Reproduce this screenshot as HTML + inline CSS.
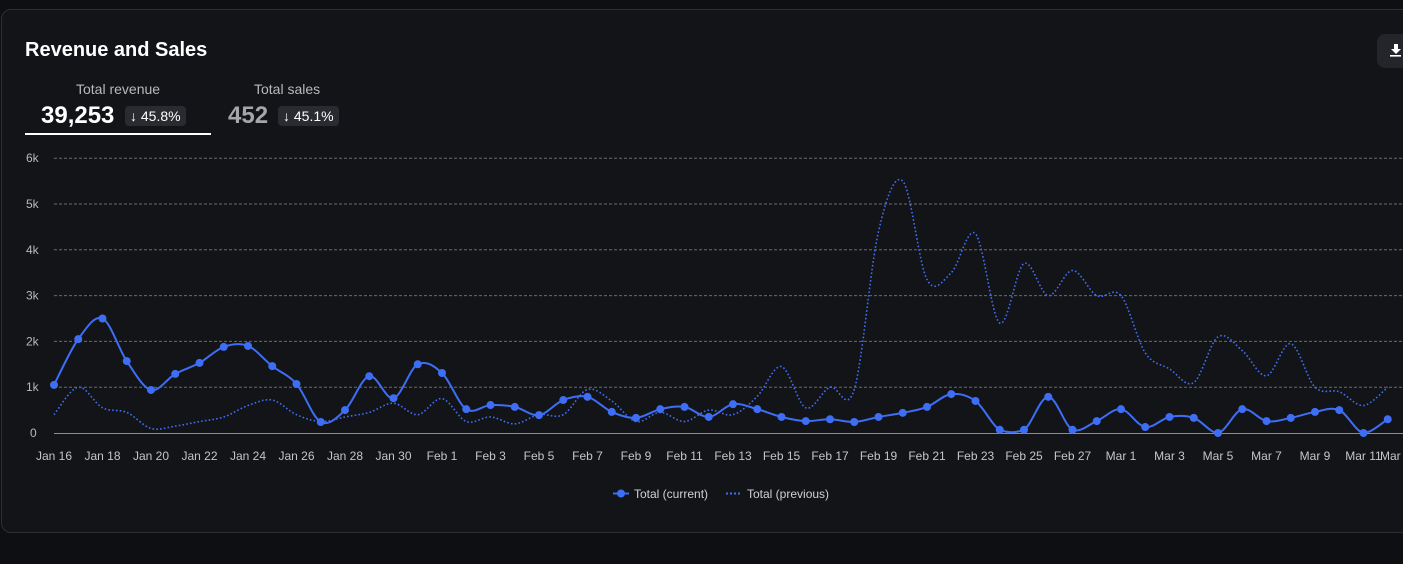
<!DOCTYPE html>
<html><head><meta charset="utf-8">
<style>
html,body{margin:0;padding:0;background:#0e0f12;width:1403px;height:564px;overflow:hidden;font-family:"Liberation Sans",sans-serif;}
.card{position:absolute;left:1px;top:9px;width:1420px;height:522px;background:#131418;border:1px solid #2c2e33;border-radius:10px;}
.title{position:absolute;left:25px;top:39px;color:#fff;font-weight:bold;font-size:20px;}
.lbl{position:absolute;color:#b8b9bd;font-size:14px;}
.big{position:absolute;font-weight:bold;font-size:24px;}
.badge{position:absolute;background:#2a2b30;color:#fff;font-size:14px;border-radius:4px;height:20px;line-height:20px;padding:0 5px;}
.dl{position:absolute;left:1377px;top:34px;width:40px;height:34px;background:#24252a;border-radius:8px;}
</style></head><body>
<div class="card"></div>
<div class="title">Revenue and Sales</div>
<div class="dl"><svg width="20" height="20" style="position:absolute;left:12px;top:8px"><path d="M5 2h4v5h3l-5 5-5-5h3z" fill="#fff"/><rect x="1" y="13" width="11" height="1.6" fill="#fff"/></svg></div>
<div class="lbl" style="left:76px;top:81px">Total revenue</div>
<div class="lbl" style="left:254px;top:81px">Total sales</div>
<div class="big" style="left:41px;top:102px;color:#fff">39,253</div>
<div class="badge" style="left:125px;top:106px">↓ 45.8%</div>
<div class="big" style="left:228px;top:102px;color:#a5a6aa">452</div>
<div class="badge" style="left:278px;top:106px">↓ 45.1%</div>
<div style="position:absolute;left:25px;top:133px;width:186px;height:2px;background:#fff"></div>
<svg id="ch" width="1403" height="564" style="position:absolute;left:0;top:0"></svg>
<script>
var cur=[1.05,2.05,2.5,1.57,0.94,1.29,1.53,1.88,1.9,1.46,1.07,0.24,0.5,1.24,0.76,1.5,1.31,0.52,0.61,0.57,0.39,0.72,0.79,0.46,0.33,0.52,0.57,0.35,0.63,0.52,0.35,0.26,0.3,0.24,0.35,0.44,0.57,0.85,0.7,0.07,0.07,0.79,0.07,0.26,0.52,0.13,0.35,0.33,0,0.52,0.26,0.33,0.46,0.5,0,0.3];
var prev=[0.4,1.0,0.55,0.45,0.1,0.15,0.25,0.35,0.6,0.72,0.4,0.25,0.35,0.45,0.65,0.4,0.75,0.25,0.35,0.2,0.4,0.4,0.95,0.7,0.25,0.45,0.25,0.5,0.4,0.8,1.45,0.55,1.0,0.95,4.4,5.5,3.35,3.5,4.35,2.4,3.7,3.0,3.55,3.0,3.0,1.75,1.4,1.1,2.1,1.8,1.25,1.95,1.0,0.9,0.6,1.0];
function X(i){return 54+i*24.25}function Y(v){return 433-v*45.8}
function c(y){return Math.min(y,433)}
function path(a){var p=a.map(function(v,i){return [X(i),Y(v)]});var d="M"+p[0][0]+" "+p[0][1];
for(var i=0;i<p.length-1;i++){var p0=p[i-1]||p[i],p1=p[i],p2=p[i+1],p3=p[i+2]||p2;
d+=" C"+(p1[0]+(p2[0]-p0[0])/6)+" "+c(p1[1]+(p2[1]-p0[1])/6)+" "+(p2[0]-(p3[0]-p1[0])/6)+" "+c(p2[1]-(p3[1]-p1[1])/6)+" "+p2[0]+" "+p2[1];}return d;}
var s="";
for(var k=1;k<=6;k++){var y=Y(k);s+='<line x1="54" x2="1403" y1="'+y+'" y2="'+y+'" stroke="#6a6b70" stroke-dasharray="3 2" stroke-width="1"/>';
s+='<text x="26" y="'+(y+4)+'" fill="#b8b9bd" font-size="12">'+k+'k</text>';}
s+='<line x1="54" x2="1403" y1="433.5" y2="433.5" stroke="#8a8b90"/><text x="30" y="437" fill="#b8b9bd" font-size="12">0</text>';
var mo=["Jan","Feb","Mar"],ml=[31,28,31],m=0,d=16;
for(var i=0;i<56;i++){if(i%2==0){s+='<text x="'+X(i)+'" y="460" fill="#c4c5c9" font-size="12" text-anchor="middle">'+mo[m]+' '+d+'</text>';}
d++;if(d>ml[m]){d=1;m++;}}
s+='<text x="1380" y="460" fill="#c4c5c9" font-size="12">Mar</text>';
s+='<path d="'+path(prev)+'" fill="none" stroke="#3e6ef5" stroke-width="1.6" stroke-dasharray="1.6 2.2"/>';
s+='<path d="'+path(cur)+'" fill="none" stroke="#3e6ef5" stroke-width="2"/>';
cur.forEach(function(v,i){s+='<circle cx="'+X(i)+'" cy="'+Y(v)+'" r="4" fill="#3e6ef5"/>';});
s+='<line x1="613" x2="629" y1="493.5" y2="493.5" stroke="#3e6ef5" stroke-width="2"/><circle cx="621" cy="493.5" r="4" fill="#3e6ef5"/><text x="634" y="498" fill="#d0d1d4" font-size="12">Total (current)</text>';
s+='<line x1="726" x2="740" y1="493.5" y2="493.5" stroke="#3e6ef5" stroke-width="2" stroke-dasharray="2 2"/><text x="747" y="498" fill="#d0d1d4" font-size="12">Total (previous)</text>';
document.getElementById("ch").innerHTML=s;
</script>
</body></html>
